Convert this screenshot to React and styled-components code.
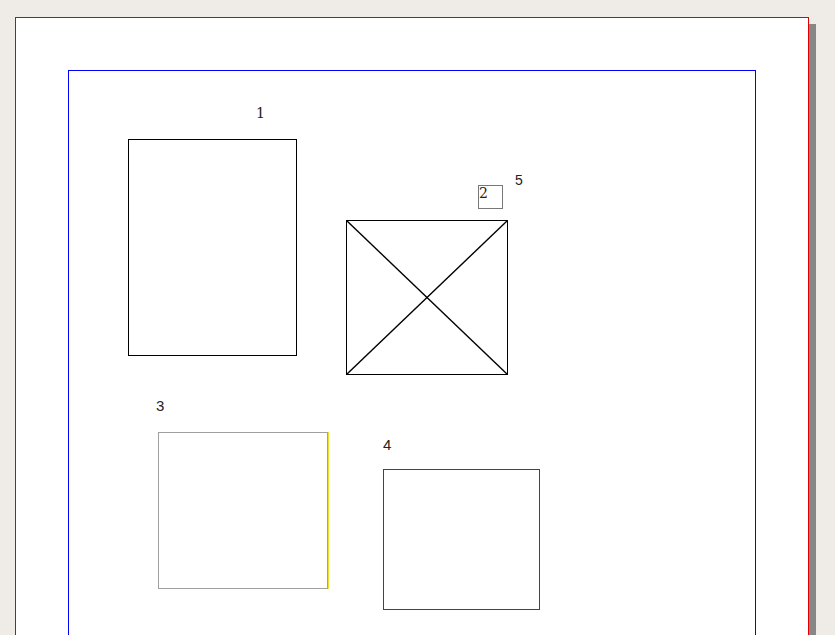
import styled, { createGlobalStyle } from "styled-components";

const GlobalStyle = createGlobalStyle`
  html, body {
    margin: 0;
    padding: 0;
    background: #efebe6;
    overflow: hidden;
  }
`;

const Viewer = styled.div`
  padding: 17px 15px;
`;

const Page = styled.div`
  width: 794px;
  height: 1123px;
  box-sizing: border-box;
  background: #fff;
  border: 1px solid #e00000;
  box-shadow: 7px 7px 0 #878787;
  padding: 52px;
`;

const Margin = styled.div`
  position: relative;
  height: 1100px;
  border: 1px solid #0000ff;
`;

// page objects sit on a free canvas: their place is the content
const Figure = styled.div`
  position: absolute;
  display: flex;
  flex-direction: column;
  align-items: flex-start;
`;

const Caption = styled.span`
  font-family: ${(p) => (p.$serif ? '"DejaVu Serif", serif' : '"Liberation Sans", Arial, sans-serif')};
  font-size: ${(p) => p.$size || 15}px;
  line-height: 1;
  color: #222;
  margin-left: ${(p) => p.$indent || 0}px;
`;

const Frame = styled.div`
  box-sizing: border-box;
  width: ${(p) => p.$w}px;
  height: ${(p) => p.$h}px;
  margin-top: ${(p) => p.$gap || 0}px;
  margin-left: ${(p) => p.$shift || 0}px;
  border: 1px solid ${(p) => p.$color || "#000"};
  box-shadow: ${(p) => (p.$edge ? `1px 0 0 ${p.$edge}` : "none")};
`;

const InnerLabel = styled.span`
  display: block;
  font-family: "DejaVu Serif", serif;
  font-size: 14px;
  line-height: 1;
  color: #222;
`;

export default function App() {
  return (
    <>
      <GlobalStyle />
      <Viewer>
        <Page>
          <Margin>
            <Figure style={{ left: 59, top: 35 }}>
              <Caption $serif $size={14} $indent={128}>1</Caption>
              <Frame $w={169} $h={217} $gap={19} />
            </Figure>

            <Figure style={{ left: 409, top: 102 }}>
              <Caption $size={14} $indent={37}>5</Caption>
              <Frame $w={25} $h={24} $gap={-2} $color="#777">
                <InnerLabel>2</InnerLabel>
              </Frame>
            </Figure>

            <Figure style={{ left: 277, top: 149 }}>
              <svg width="162" height="155" viewBox="0 0 162 155">
                <rect x="0.5" y="0.5" width="161" height="154" fill="none" stroke="#000" />
                <line x1="0.5" y1="0.5" x2="161.5" y2="154.5" stroke="#000" strokeWidth="1.4" />
                <line x1="161.5" y1="0.5" x2="0.5" y2="154.5" stroke="#000" strokeWidth="1.4" />
              </svg>
            </Figure>

            <Figure style={{ left: 87, top: 327 }}>
              <Caption>3</Caption>
              <Frame $w={170} $h={157} $gap={19} $shift={2} $color="#a0a0a0" $edge="#f0df2a" />
            </Figure>

            <Figure style={{ left: 314, top: 366 }}>
              <Caption>4</Caption>
              <Frame $w={157} $h={141} $gap={17} $color="#444" />
            </Figure>
          </Margin>
        </Page>
      </Viewer>
    </>
  );
}
